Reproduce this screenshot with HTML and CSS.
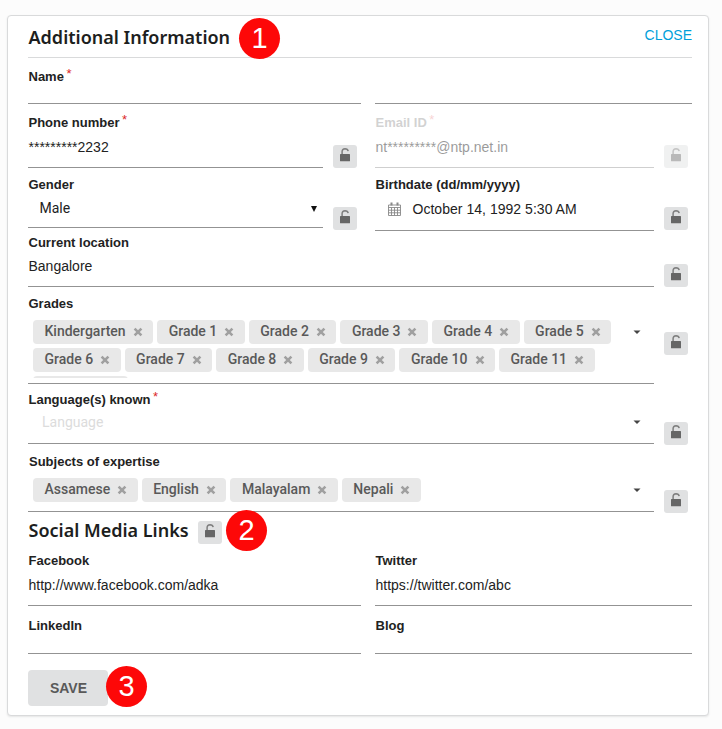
FILE: index.html
```
<!DOCTYPE html>
<html lang="en">
<head>
<meta charset="utf-8">
<title>Additional Information</title>
<link rel="stylesheet" href="styles.css">
</head>
<body>
<svg width="0" height="0" class="defs" aria-hidden="true">
  <symbol id="lock" viewBox="0 0 24 23">
    <path d="M9.1 9V6.6q0-2.7 3-2.9q2.6 0 3.1 2.4" fill="none" stroke="currentColor" stroke-width="1.5" opacity=".8"/>
    <rect x="7" y="9" width="10" height="7.2" rx=".5" fill="currentColor"/>
  </symbol>
  <symbol id="x" viewBox="0 0 10 10">
    <path d="M1.6 1.6l6.8 6.8M8.4 1.6L1.6 8.4" stroke="currentColor" stroke-width="2.6"/>
  </symbol>
  <symbol id="caret" viewBox="0 0 8 5"><path d="M.5 .5h7L4 4z" fill="currentColor"/></symbol>
</svg>
<main class="card">
  <header class="head">
    <h2 class="title">Additional Information</h2>
    <a class="close">CLOSE</a>
    <span class="badge b1">1</span>
  </header>

  <div class="row r1">
    <div class="field"><label class="label">Name<sup>*</sup></label></div>
    <div class="field"></div>
  </div>

  <div class="row r2">
    <div class="cell">
      <div class="field"><label class="label">Phone number<sup>*</sup></label><div class="value">*********2232</div></div>
      <button class="lock"><svg><use href="#lock"/></svg></button>
    </div>
    <div class="cell disabled">
      <div class="field"><label class="label">Email ID<sup>*</sup></label><div class="value">nt*********@ntp.net.in</div></div>
      <button class="lock"><svg><use href="#lock"/></svg></button>
    </div>
  </div>

  <div class="row r3">
    <div class="cell">
      <div class="field gender"><label class="label">Gender</label>
        <div class="value select"><span>Male</span><svg class="tri" viewBox="0 0 6 6"><path d="M0 0h6L3 6z"/></svg></div></div>
      <button class="lock"><svg><use href="#lock"/></svg></button>
    </div>
    <div class="cell">
      <div class="field"><label class="label">Birthdate (dd/mm/yyyy)</label>
        <div class="value date">
          <svg class="cal" viewBox="0 0 13 14"><path d="M.5 3h12v10.5H.5zM.5 5.5h12M3.5 5.5v8M6.5 5.5v8M9.5 5.5v8M.5 8.2h12M.5 10.8h12"/><path d="M3.5.5v3M9.5.5v3" stroke-width="2"/></svg>
          <span>October 14, 1992 5:30 AM</span></div></div>
      <button class="lock"><svg><use href="#lock"/></svg></button>
    </div>
  </div>

  <div class="cell r4">
    <div class="field"><label class="label">Current location</label><div class="value">Bangalore</div></div>
    <button class="lock"><svg><use href="#lock"/></svg></button>
  </div>

  <div class="cell r5">
    <div class="field"><label class="label">Grades</label>
      <div class="picker">
        <div class="chips">
          <span class="chip">Kindergarten<svg><use href="#x"/></svg></span>
          <span class="chip">Grade 1<svg><use href="#x"/></svg></span>
          <span class="chip">Grade 2<svg><use href="#x"/></svg></span>
          <span class="chip">Grade 3<svg><use href="#x"/></svg></span>
          <span class="chip">Grade 4<svg><use href="#x"/></svg></span>
          <span class="chip">Grade 5<svg><use href="#x"/></svg></span>
          <span class="chip">Grade 6<svg><use href="#x"/></svg></span>
          <span class="chip">Grade 7<svg><use href="#x"/></svg></span>
          <span class="chip">Grade 8<svg><use href="#x"/></svg></span>
          <span class="chip">Grade 9<svg><use href="#x"/></svg></span>
          <span class="chip">Grade 10<svg><use href="#x"/></svg></span>
          <span class="chip">Grade 11<svg><use href="#x"/></svg></span>
          <span class="chip stub"></span>
        </div>
        <svg class="caret"><use href="#caret"/></svg>
      </div>
    </div>
    <button class="lock"><svg><use href="#lock"/></svg></button>
  </div>

  <div class="cell r6">
    <div class="field"><label class="label">Language(s) known<sup>*</sup></label>
      <div class="picker placeholder"><span>Language</span><svg class="caret"><use href="#caret"/></svg></div></div>
    <button class="lock"><svg><use href="#lock"/></svg></button>
  </div>

  <div class="cell r7">
    <div class="field"><label class="label">Subjects of expertise</label>
      <div class="picker">
        <div class="chips">
          <span class="chip">Assamese<svg><use href="#x"/></svg></span>
          <span class="chip">English<svg><use href="#x"/></svg></span>
          <span class="chip">Malayalam<svg><use href="#x"/></svg></span>
          <span class="chip">Nepali<svg><use href="#x"/></svg></span>
        </div>
        <svg class="caret"><use href="#caret"/></svg>
      </div>
    </div>
    <button class="lock"><svg><use href="#lock"/></svg></button>
  </div>

  <div class="social">
    <h2 class="title">Social Media Links</h2>
    <button class="lock"><svg><use href="#lock"/></svg></button>
    <span class="badge b2">2</span>
  </div>

  <div class="row r8">
    <div class="field"><label class="label">Facebook</label><div class="value">http://www.facebook.com/adka</div></div>
    <div class="field"><label class="label">Twitter</label><div class="value">https://twitter.com/abc</div></div>
  </div>
  <div class="row r9">
    <div class="field"><label class="label">LinkedIn</label></div>
    <div class="field"><label class="label">Blog</label></div>
  </div>

  <div class="actions">
    <button class="save">SAVE</button>
    <span class="badge b3">3</span>
  </div>
</main>
</body>
</html>
```
FILE: styles.css
```
* { box-sizing: border-box; }
body { margin: 0; height: 729px; overflow: hidden; background: #fcfcfc; color: #222; font: 14px/16px Roboto, "Liberation Sans", sans-serif; }
.defs { position: absolute; }
.card { width: 702px; height: 701px; margin: 15px 0 0 7px; padding: 0 16px 0 20px; background: #fff; border: 1px solid #d9dadb; border-radius: 4px; box-shadow: 0 1px 2px rgba(34, 36, 38, .1); }
.head { position: relative; display: flex; justify-content: space-between; height: 42px; border-bottom: 1px solid #d9dadb; }
.title { margin: 0; padding-left: .5px; font: 600 18px/24px "Noto Sans", sans-serif; color: #1c1e20; white-space: nowrap; }
.head .title { padding-top: 9px; }
.close { padding-top: 11px; color: #009fda; font: 14px/16px "Liberation Sans", sans-serif; }

.row { display: grid; grid-template-columns: 333px 317px; column-gap: 14px; }
.cell { display: flex; align-items: flex-end; gap: 10px; padding-right: 4px; }
.field { flex: 1; align-self: stretch; min-width: 0; border-bottom: 1px solid #939393; white-space: nowrap; }
.label { display: block; height: 16px; font: 700 13px/16px "Liberation Sans", sans-serif; color: #222; padding-left: .5px; }
.label sup { margin-left: 2.5px; font: 13px/0 "Liberation Sans", sans-serif; color: #db2828; vertical-align: 3.5px; }
.value { margin-top: 8px; padding-left: .5px; font: 14px/16px "Liberation Sans", sans-serif; }

.r1 { height: 46px; } .r1 .field { padding-top: 11px; }
.r2 { height: 64px; } .r2 .field { padding-top: 11px; }
.r3 { height: 63px; } .r3 .field { padding-top: 9px; }
.r3 .gender { margin-bottom: 3px; }
.r3 .lock { margin-bottom: 1px; }
.r4 { height: 56px; } .r4 .field { padding-top: 4px; } .r4 .value { margin-top: 7px; }
.r5 { height: 97px; } .r5 .field { padding-top: 9px; } .r5 .lock { margin-bottom: 29px; }
.r6 { height: 60px; } .r6 .field { padding-top: 8px; } .r6 .lock { margin-bottom: -1px; }
.r7 { height: 68px; } .r7 .field { padding-top: 10px; } .r7 .lock { margin-bottom: -1px; }
.r7 .label { padding-left: 1px; }
.r8 { height: 58px; } .r8 .field { padding-top: 5px; }
.r9 { height: 48px; } .r9 .field { padding-top: 12px; }

.lock { flex: none; width: 24px; height: 23px; padding: 0; border: 0; border-radius: 3px; background: #e0e1e2; color: #666; }
.lock svg { display: block; width: 24px; height: 23px; }
.disabled .value, .disabled .lock { opacity: .45; }
.disabled .label { opacity: .2; }
.disabled .field { border-color: #cfcfcf; }

.select { display: flex; justify-content: space-between; align-items: center; margin-top: 7px; padding: 0 6px 0 11.5px; font-family: Roboto, sans-serif; }
.tri { width: 6px; height: 6px; margin-top: 1px; fill: #111; }
.date { display: flex; align-items: center; gap: 12px; padding-left: 12.5px; }
.date span { letter-spacing: .03px; }
.cal { width: 13px; height: 14px; fill: none; stroke: #888; stroke-width: .9; }

.picker { display: flex; justify-content: space-between; margin-top: 8px; padding: 0 13px 0 5px; }
.chips { display: flex; flex-wrap: wrap; align-content: flex-start; gap: 4px; width: 590px; max-height: 58px; overflow: hidden; }
.chip { display: flex; align-items: center; height: 24px; padding: 0 10.5px 2px 11.5px; border-radius: 4px; background: #e8e8e8; color: #595959; font: 500 14px/22px Roboto, sans-serif; }
.chip svg { width: 10px; height: 10px; margin: 2px 0 0 7px; color: #a0a0a0; }
.stub { width: 95px; }
.caret { flex: none; width: 8px; height: 5px; margin-top: 10px; color: #444; }
.placeholder { margin-top: 6px; padding-left: 14px; color: #dcdcdc; }
.placeholder .caret { margin-top: 6px; }

.social { position: relative; display: flex; height: 36px; }
.social .title { width: 170px; padding-top: 6px; }
.social .lock { margin-top: 9px; }

.badge { position: absolute; width: 41px; height: 41px; border-radius: 50%; background: #fd0808; color: #fff; font: 29px/41px "Liberation Sans", sans-serif; text-align: center; }
.b1 { left: 211px; top: 2px; }
.b2 { left: 198px; top: -2px; }
.b3 { left: 78px; top: -4px; }
.actions { position: relative; margin-top: 16px; }
.save { display: block; width: 80px; height: 36px; padding: 0 0 0 1px; border: 0; border-radius: 4px; background: #e0e1e2; color: #595959; font: 700 14px/36px "Liberation Sans", sans-serif; }
```
